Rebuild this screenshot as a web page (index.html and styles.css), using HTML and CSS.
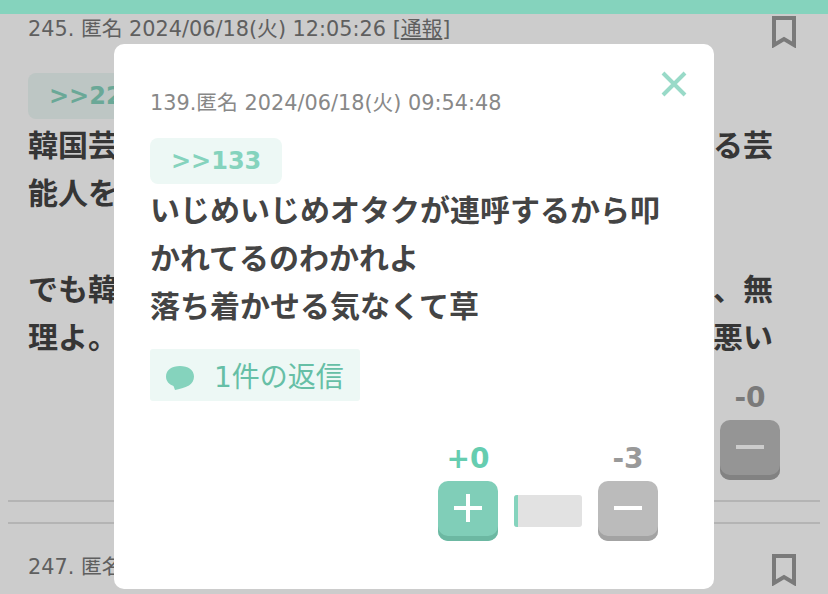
FILE: index.html
```html
<!DOCTYPE html>
<html lang="ja">
<head>
    <meta charset="UTF-8">
    <title>コメント</title>
    <link rel="stylesheet" href="styles.css">
</head>
<body>
    <div class="topbar"></div>

    <div class="comment first">
        <div class="meta-row">
            <div class="meta">245. 匿名 2024/06/18(火) 12:05:26 [<u>通報</u>]</div>
            <svg class="bookmark" viewBox="0 0 24 32"><path d="M2 2h20v27l-10-6-10 6z"/></svg>
        </div>
        <div class="anchor">&gt;&gt;22</div>
        <div class="body">
            <div class="line"><span>韓国芸</span><span>る芸</span></div>
            <div class="line"><span>能人を</span></div>
            <div class="line">&nbsp;</div>
            <div class="line"><span>でも韓</span><span>、無</span></div>
            <div class="line"><span>理よ。</span><span>悪い</span></div>
        </div>
        <div class="votes bg-votes">
            <div class="vote">
                <span class="count minus">-0</span>
                <button class="btn btn-minus"><span class="bar"></span></button>
            </div>
        </div>
    </div>
    <hr class="rule">
    <hr class="rule rule-second">
    <div class="comment second">
        <div class="meta-row">
            <div class="meta">247. 匿名</div>
            <svg class="bookmark" viewBox="0 0 24 32"><path d="M2 2h20v27l-10-6-10 6z"/></svg>
        </div>
    </div>

    <div class="overlay"></div>

    <div class="modal">
        <svg class="close" viewBox="0 0 26 26"><path d="M2 2l22 22M24 2L2 24"/></svg>
        <div class="modal-meta">139.匿名 2024/06/18(火) 09:54:48</div>
        <div class="anchor">&gt;&gt;133</div>
        <div class="body">
            <div class="line">いじめいじめオタクが連呼するから叩</div>
            <div class="line">かれてるのわかれよ</div>
            <div class="line">落ち着かせる気なくて草</div>
        </div>
        <div class="replies">
            <svg class="reply-icon" viewBox="0 0 28 24"><path d="M14 0C6 0 0 4 0 10.500c0 4.500 3 8 7.500 9.500l1.500 4c4-1 10-2 14-4.500 3-2 5-5 5-9C28 4 22 0 14 0z"/></svg>
            <span>1件の返信</span>
        </div>
        <div class="votes">
            <div class="vote">
                <span class="count plus">+0</span>
                <button class="btn btn-plus"><span class="bar"></span><span class="bar bar-v"></span></button>
            </div>
            <div class="meter"><div class="meter-fill" style="width: 6%"></div></div>
            <div class="vote">
                <span class="count minus">-3</span>
                <button class="btn btn-minus"><span class="bar"></span></button>
            </div>
        </div>
    </div>
</body>
</html>
```
FILE: styles.css
```css
html, body {
    margin: 0;
    height: 594px;
    overflow: hidden;
}
body {
    position: relative;
    background-color: #fff;
    color: #444;
    font-family: "DejaVu Sans", "Noto Sans CJK JP", sans-serif;
}
.topbar {
    position: relative;
    z-index: 3;
    height: 14px;
    background-color: #85d3bd;
}
.comment {
    padding: 0 28px;
}
.first {
    height: 486px;
}
.first .body {
    margin-right: 27px;
}
.second {
    padding-top: 30px;
}
.meta-row {
    display: flex;
    justify-content: space-between;
    align-items: flex-start;
}
.meta {
    margin-top: 2px;
    font-size: 20.8px;
    line-height: 26px;
    color: #777;
}
.second .meta {
    margin-top: 0;
}
.bookmark {
    width: 24px;
    height: 32px;
    margin: 2px 4px 0 0;
    fill: none;
    stroke: #999;
    stroke-width: 4;
}
.second .bookmark {
    margin-top: 0;
}
.comment .anchor {
    margin-top: 25px;
}
.anchor {
    width: 132px;
    height: 46px;
    box-sizing: border-box;
    padding-left: 21px;
    border-radius: 8px;
    background-color: #edf8f5;
    color: #85d3bd;
    font-size: 24px;
    font-weight: bold;
    line-height: 46px;
}
.body {
    margin-top: 3px;
    font-size: 30px;
    font-weight: bold;
    line-height: 48px;
    color: #444;
    white-space: nowrap;
}
.line {
    display: flex;
    justify-content: space-between;
    height: 48px;
}
.votes {
    display: flex;
    justify-content: flex-end;
    align-items: flex-end;
}
.bg-votes {
    margin: 18px 20px 0 0;
}
.vote {
    display: flex;
    flex-direction: column;
    align-items: center;
    width: 60px;
}
.count {
    margin-bottom: 4px;
    font-size: 28px;
    font-weight: bold;
    line-height: 36px;
}
.plus {
    color: #66cdb0;
}
.minus {
    color: #999;
}
.btn {
    position: relative;
    display: block;
    width: 60px;
    height: 60px;
    padding: 0;
    border: 0;
    border-radius: 10px;
}
.btn-plus {
    background-color: #80ceb8;
    box-shadow: inset 0 -5px 0 #6cb8a2;
}
.btn-minus {
    background-color: #bbb;
    box-shadow: inset 0 -5px 0 #a3a3a3;
}
.bar {
    position: absolute;
    left: 16px;
    top: 25px;
    width: 28px;
    height: 4px;
    background-color: #fff;
}
.bar-v {
    left: 28px;
    top: 13px;
    width: 4px;
    height: 28px;
}
.rule {
    height: 2px;
    margin: 0 8px;
    border: 0;
    background-color: #e2e2e2;
}
.rule-second {
    margin-top: 20px;
}
.overlay {
    position: absolute;
    z-index: 1;
    inset: 0;
    background-color: rgba(0, 0, 0, 0.2);
}
.modal {
    position: absolute;
    z-index: 2;
    left: 114px;
    top: 44px;
    width: 600px;
    height: 545px;
    box-sizing: border-box;
    padding: 46px 56px 0 36px;
    border-radius: 10px;
    background-color: #fff;
}
.close {
    position: absolute;
    left: 547px;
    top: 27px;
    width: 26px;
    height: 26px;
    fill: none;
    stroke: #99dac8;
    stroke-width: 4;
}
.modal-meta {
    font-size: 20.8px;
    line-height: 26px;
    color: #888;
    margin-bottom: 22px;
}
.replies {
    display: inline-flex;
    align-items: center;
    gap: 20px;
    height: 52px;
    margin-top: 18px;
    padding: 0 16px;
    border-radius: 3px;
    background-color: #edf8f5;
    color: #66bfa6;
    font-size: 28px;
}
.reply-icon {
    width: 28px;
    height: 24px;
    margin-top: 6px;
    fill: #85d3bd;
}
.votes .meter {
    width: 68px;
    height: 32px;
    margin: 0 16px 14px;
    border-radius: 3px;
    overflow: hidden;
    background-color: #e2e2e2;
}
.meter-fill {
    height: 100%;
    background-color: #85d3bd;
}
.modal .votes {
    margin-top: 40px;
}
```
